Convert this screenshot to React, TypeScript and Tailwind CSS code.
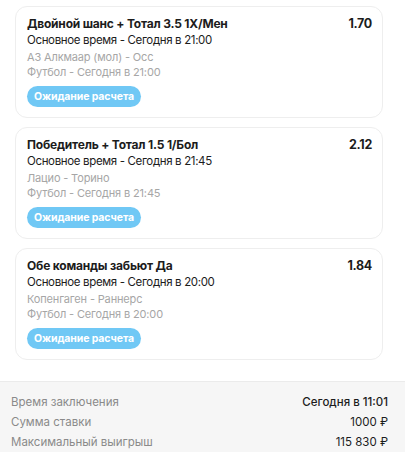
import React from "react";

const bets = [
  {
    title: "Двойной шанс + Тотал 3.5 1X/Мен",
    odd: "1.70",
    sub: "Основное время - Сегодня в 21:00",
    teams: "АЗ Алкмаар (мол) - Осс",
    sport: "Футбол - Сегодня в 21:00",
  },
  {
    title: "Победитель + Тотал 1.5 1/Бол",
    odd: "2.12",
    sub: "Основное время - Сегодня в 21:45",
    teams: "Лацио - Торино",
    sport: "Футбол - Сегодня в 21:45",
  },
  {
    title: "Обе команды забьют Да",
    odd: "1.84",
    sub: "Основное время - Сегодня в 20:00",
    teams: "Копенгаген - Раннерс",
    sport: "Футбол - Сегодня в 20:00",
  },
];

export default function App() {
  return (
    <div
      className="w-[405px] h-[452px] overflow-hidden bg-white flex flex-col"
      style={{ fontFamily: "Inter, 'Noto Sans', sans-serif" }}
    >
      <div className="flex flex-col gap-[9px] pl-[15px] pr-[22px] pt-[6px]">
        {bets.map((b, i) => (
          <div
            key={i}
            className="h-[112px] rounded-[12px] border border-[#eeeeee] bg-white pl-[11px] pr-[10px] pt-[9px]"
          >
            <div className="flex justify-between items-start">
              <div className="text-[12px] leading-[16px] font-bold text-[#1c1c1c] tracking-[-0.2px]">
                {b.title}
              </div>
              <div className="text-[12.5px] leading-[16px] font-bold text-[#1c1c1c] tracking-[-0.3px]">
                {b.odd}
              </div>
            </div>
            <div className="text-[11.5px] leading-[16px] text-[#1c1c1c] tracking-[-0.35px]">{b.sub}</div>
            <div className="mt-[2px] text-[11px] leading-[15px] text-[#a6a6a6] tracking-[-0.15px]">{b.teams}</div>
            <div className="text-[11px] leading-[15px] text-[#a6a6a6] tracking-[-0.15px]">{b.sport}</div>
            <div className="mt-[6px] inline-flex h-[21px] items-center rounded-full bg-[#70c8f5] px-[7px] text-[10.5px] font-bold text-white tracking-[-0.1px]">
              Ожидание расчета
            </div>
          </div>
        ))}
      </div>
      <div className="mt-[21px] flex-1 border-t border-[#ebebeb] bg-[#f6f6f6] pl-[11px] pr-[17px] pt-[10px] text-[11.5px] leading-[20px]">
        <div className="flex justify-between">
          <span className="text-[#8a8a8a]">Время заключения</span>
          <span className="text-[#1c1c1c] font-medium">Сегодня в 11:01</span>
        </div>
        <div className="flex justify-between">
          <span className="text-[#8a8a8a]">Сумма ставки</span>
          <span className="text-[#1c1c1c]">1000 ₽</span>
        </div>
        <div className="flex justify-between">
          <span className="text-[#8a8a8a]">Максимальный выигрыш</span>
          <span className="text-[#1c1c1c]">115 830 ₽</span>
        </div>
      </div>
    </div>
  );
}
